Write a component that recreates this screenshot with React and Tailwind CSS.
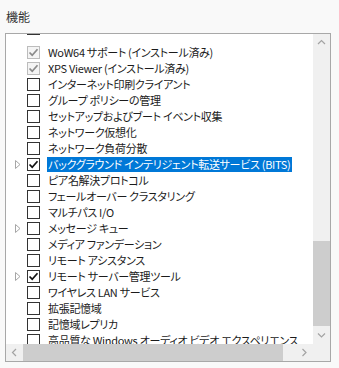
const features = [
  { label: "WoW64 サポート (インストール済み)", state: "installed" },
  { label: "XPS Viewer (インストール済み)", state: "installed" },
  { label: "インターネット印刷クライアント" },
  { label: "グループ ポリシーの管理" },
  { label: "セットアップおよびブート イベント収集" },
  { label: "ネットワーク仮想化" },
  { label: "ネットワーク負荷分散" },
  { label: "バックグラウンド インテリジェント転送サービス (BITS)", state: "checked", expand: true, selected: true },
  { label: "ピア名解決プロトコル" },
  { label: "フェールオーバー クラスタリング" },
  { label: "マルチパス I/O" },
  { label: "メッセージ キュー", expand: true },
  { label: "メディア ファンデーション" },
  { label: "リモート アシスタンス" },
  { label: "リモート サーバー管理ツール", state: "checked", expand: true },
  { label: "ワイヤレス LAN サービス" },
  { label: "拡張記憶域" },
  { label: "記憶域レプリカ" },
  { label: "高品質な Windows オーディオ ビデオ エクスペリエンス" },
];

function Chevron({ dir }) {
  const pts = {
    up: "1,5 4.5,1.5 8,5",
    down: "1,1.5 4.5,5 8,1.5",
    left: "5,1 1.5,4.5 5,8",
    right: "1.5,1 5,4.5 1.5,8",
  }[dir];
  const vertical = dir === "up" || dir === "down";
  return (
    <svg width={vertical ? 9 : 7} height={vertical ? 7 : 9} viewBox={vertical ? "0 0 9 7" : "0 0 7 9"}>
      <polyline points={pts} fill="none" stroke="#a3a3a3" strokeWidth="1.2" />
    </svg>
  );
}

function CheckBox({ state }) {
  const installed = state === "installed";
  const checked = state === "checked" || installed;
  return (
    <div
      className={`w-[13px] h-[13px] border flex items-center justify-center shrink-0 ${
        installed ? "border-[#bcbcbc] bg-[#f4f4f4]" : "border-[#333333] bg-white"
      }`}
    >
      {checked && (
        <svg width="11" height="11" viewBox="0 0 11 11">
          <polyline
            points="1.5,5.5 4.2,8.2 9.5,2.2"
            fill="none"
            stroke={installed ? "#8a8a8a" : "#111111"}
            strokeWidth="1.7"
          />
        </svg>
      )}
    </div>
  );
}

function Row({ f }) {
  return (
    <div className="h-4 flex items-center whitespace-nowrap">
      <div className="w-[21px] pl-[9px] shrink-0 flex items-center">
        {f.expand && (
          <svg width="6" height="9" viewBox="0 0 6 9">
            <polygon points="0.5,0.5 5,4.5 0.5,8.5" fill="none" stroke="#a6a6a6" strokeWidth="1" />
          </svg>
        )}
      </div>
      <CheckBox state={f.state} />
      <span
        className={`ml-[7px] h-[15px] leading-[15px] px-[1px] ${
          f.selected ? "bg-[#0078d7] text-white" : "text-[#1b1b1b]"
        }`}
      >
        {f.label}
      </span>
    </div>
  );
}

export default function App() {
  return (
    <div className="w-[339px] h-[368px] bg-[#f9f9f9] font-['Noto_Sans_CJK_JP','Noto_Sans',sans-serif] text-[11px] tracking-[-0.3px] [font-feature-settings:'palt'] overflow-hidden">
      <div className="pl-[6px] pt-[8px] h-[33px] text-[12px] tracking-normal text-[#333333]">機能</div>

      <div className="ml-[5px] w-[326px] h-[329px] border border-[#a8a8a8] bg-white grid grid-cols-[307px_17px] grid-rows-[310px_17px]">
        {/* list */}
        <div className="overflow-hidden">
          <div className="h-[10px] overflow-hidden">
            <div className="-mt-[14px]">
              <Row f={{ label: "Windows TIFF IFilter" }} />
            </div>
          </div>
          {features.map((f, i) => (
            <Row key={i} f={f} />
          ))}
        </div>

        {/* vertical scrollbar */}
        <div className="bg-[#f0f0f0] flex flex-col">
          <div className="h-[17px] flex items-center justify-center">
            <Chevron dir="up" />
          </div>
          <div className="h-[190px]" />
          <div className="h-[85px] bg-[#cdcdcd]" />
          <div className="flex-1" />
          <div className="h-[17px] flex items-center justify-center">
            <Chevron dir="down" />
          </div>
        </div>

        {/* horizontal scrollbar */}
        <div className="bg-[#f0f0f0] flex">
          <div className="w-[17px] flex items-center justify-center">
            <Chevron dir="left" />
          </div>
          <div className="w-[260px] bg-[#cdcdcd]" />
          <div className="flex-1" />
          <div className="w-[17px] flex items-center justify-center">
            <Chevron dir="right" />
          </div>
        </div>

        <div className="bg-[#f0f0f0]" />
      </div>
    </div>
  );
}
